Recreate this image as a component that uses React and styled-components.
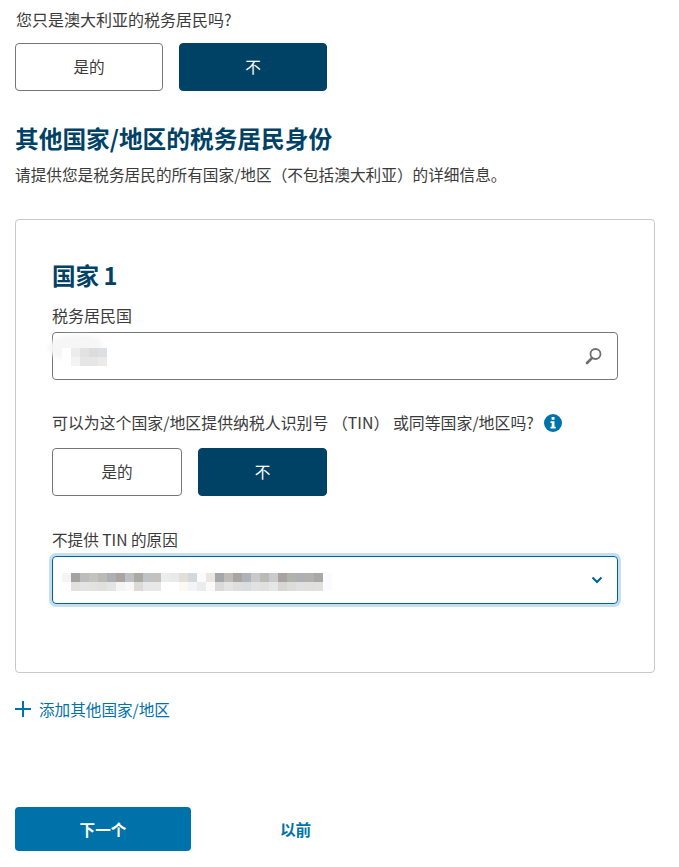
import React from "react";
import styled, { createGlobalStyle } from "styled-components";

const GlobalStyle = createGlobalStyle`
  html, body {
    margin: 0;
    padding: 0;
    background: #fff;
  }
  body {
    font-family: "Noto Sans CJK SC", "Liberation Sans", sans-serif;
    font-size: 15.6px;
    color: #3b3b3b;
  }
  * {
    box-sizing: border-box;
  }
`;

const Page = styled.div`
  width: 679px;
  height: 867px;
  padding: 7px 24px 0 15px;
  overflow: hidden;
`;

const Question = styled.div`
  font-size: ${(p) => p.$size}px;
  line-height: 24px;
  padding-left: ${(p) => p.$indent ?? 1}px;
`;

const Choices = styled.div`
  display: flex;
  gap: 16px;
  margin-top: ${(p) => p.$top}px;
`;

const Choice = styled.button`
  width: ${(p) => p.$width}px;
  height: 48px;
  padding: 0 0 2px;
  border-radius: 4px;
  border: 1px solid ${(p) => (p.$active ? "#004266" : "#767676")};
  background: ${(p) => (p.$active ? "#004266" : "#fff")};
  color: ${(p) => (p.$active ? "#fff" : "#3b3b3b")};
  font: inherit;
`;

const Heading = styled.h2`
  margin: 31px 0 0;
  font-size: 23.7px;
  line-height: 32px;
  font-weight: 700;
  color: #004266;
`;

const Lead = styled.p`
  margin: 9px 0 0;
  font-size: 15.67px;
  line-height: 24px;
`;

const Card = styled.section`
  margin-top: 32px;
  width: 640px;
  height: 454px;
  border: 1px solid #c8c8c8;
  border-radius: 4px;
  padding: 39px 36px 0;
`;

const CardTitle = styled.h3`
  margin: 0;
  font-size: 23.6px;
  line-height: 32px;
  font-weight: 700;
  word-spacing: -1px;
  color: #004266;
`;

const Label = styled.label`
  display: block;
  margin-top: ${(p) => p.$top}px;
  font-size: ${(p) => p.$size}px;
  line-height: 24px;
`;

const Field = styled.div`
  position: relative;
  display: flex;
  align-items: center;
  justify-content: flex-end;
  width: 566px;
  height: 48px;
  margin-top: 5px;
  padding-right: 14px;
  border-radius: 4px;
  border: 1px solid ${(p) => (p.$focused ? "#00609a" : "#767676")};
  box-shadow: ${(p) => (p.$focused ? "0 0 0 3px #c3deed" : "none")};
`;

const InfoRow = styled.div`
  display: flex;
  align-items: center;
  gap: 10px;
  margin-top: 31px;
  line-height: 24px;
`;

const Pixels = styled.div`
  position: absolute;
  left: ${(p) => p.$left}px;
  top: ${(p) => p.$top}px;
  display: grid;
  grid-template-columns: repeat(${(p) => p.$cols}, 9px);
  grid-auto-rows: ${(p) => p.$rowHeight}px;
`;

const Smudge = styled.div`
  position: absolute;
  left: -5px;
  top: 2px;
  width: 54px;
  height: 26px;
  background: #f6f6f6;
  border-radius: 60% 40% 40% 60%;
  filter: blur(2px);
`;

const AddLink = styled.div`
  display: flex;
  align-items: center;
  gap: 8px;
  margin-top: 24px;
  line-height: 24px;
  color: #0072aa;
`;

const Actions = styled.div`
  display: flex;
  align-items: center;
  margin-top: 86px;
`;

const NextButton = styled.button`
  width: 176px;
  height: 44px;
  border: none;
  border-radius: 4px;
  background: #0072aa;
  color: #fff;
  font: inherit;
  font-weight: 700;
`;

const BackButton = styled.button`
  margin-left: 89px;
  padding: 0;
  border: none;
  background: none;
  color: #0072aa;
  font: inherit;
  font-weight: 700;
`;

const countryCells = [
  "#fff", "#ececec", "#e2e2e2", "#dcdcdc", "#dde0e2",
  "#fff", "#f3f3f3", "#e6e6e6", "#e6e6e6", "#eaeaea",
];

const reasonTop = [
  "#f5f5f5",
  "#a3a3a3", "#bdbdbd", "#c3c3c0", "#bcbab6", "#aeafb2", "#aba2a2", "#bdc0c2", "#aca8a2", "#bcc4c8", "#c5c2bd",
  "#ebecec", "#e9e9e9", "#e2deda", "#d2d8dc", "#fbfbfb", "#ece6e2", "#a4a8aa", "#c0bbb8", "#a9a6a2", "#b0b3b6",
  "#c9cacc", "#bcbab6", "#c8cacc", "#a8a2a0", "#b0b2ae", "#aeaeb4", "#b2b0ac", "#a8a8a6",
  "#fbfbfe",
];

const reasonBottom = [
  "#fff",
  "#e2e0de", "#e4e4e2", "#e2e2e0", "#e0e0de", "#e4e4e4", "#f4f4f4", "#f8f8f8", "#dcdad8", "#e8e8e8", "#e8e8e8",
  "#fff", "#fff", "#fcf8f4", "#f2f4f8", "#ececec", "#fafafa", "#dcdad8", "#e4e4e4", "#dedede", "#dadcde",
  "#e2e2e2", "#e0e0de", "#e6e6e6", "#d6d6d4", "#dcdcda", "#e0e0e0", "#e0dfde", "#e0e0e0",
  "#fbfbfe",
];

const PixelBlur = ({ cells, cols, left, top, rowHeight }) => (
  <Pixels $cols={cols} $left={left} $top={top} $rowHeight={rowHeight} aria-hidden="true">
    {cells.map((color, i) => (
      <div key={i} style={{ background: color }} />
    ))}
  </Pixels>
);

const SearchIcon = () => (
  <svg width="18" height="18" viewBox="0 0 18 18" fill="none">
    <circle cx="10.5" cy="7" r="5" stroke="#6f6f6f" strokeWidth="1.8" />
    <path d="M7 11 L2 16" stroke="#6f6f6f" strokeWidth="2.6" strokeLinecap="round" />
  </svg>
);

const ChevronIcon = () => (
  <svg width="12" height="8" viewBox="0 0 12 8" fill="none">
    <path d="M1.5 1.5 L6 6 L10.5 1.5" stroke="#00609a" strokeWidth="2" />
  </svg>
);

const InfoIcon = () => (
  <svg width="18" height="18" viewBox="0 0 18 18">
    <circle cx="9" cy="9" r="9" fill="#0072aa" />
    <rect x="7.6" y="3" width="2.9" height="2.8" fill="#fff" />
    <path d="M6.5 7.3 H10.5 V12.8 H11.7 V14.6 H6.5 V12.8 H7.7 V9.1 H6.5 Z" fill="#fff" />
  </svg>
);

const PlusIcon = () => (
  <svg width="16" height="16" viewBox="0 0 16 16">
    <path d="M8 0 V16 M0 8 H16" stroke="#0072aa" strokeWidth="2" />
  </svg>
);

export default function App() {
  return (
    <Page>
      <GlobalStyle />
      <Question $size={16}>您只是澳大利亚的税务居民吗?</Question>
      <Choices $top={12}>
        <Choice $width={148}>是的</Choice>
        <Choice $width={148} $active>不</Choice>
      </Choices>

      <Heading>其他国家/地区的税务居民身份</Heading>
      <Lead>{"请提供您是税务居民的所有国家/地区\uFF08不包括澳大利亚\uFF09的详细信息。"}</Lead>

      <Card>
        <CardTitle>国家 1</CardTitle>
        <Label $top={12} $size={16}>税务居民国</Label>
        <Field>
          <Smudge />
          <PixelBlur cells={countryCells} cols={5} left={9} top={15} rowHeight={9} />
          <SearchIcon />
        </Field>

        <InfoRow>
          <Question $size={15.9} $indent={0}>{"可以为这个国家/地区提供纳税人识别号 \uFF08TIN\uFF09 或同等国家/地区吗?"}</Question>
          <InfoIcon />
        </InfoRow>
        <Choices $top={13}>
          <Choice $width={130}>是的</Choice>
          <Choice $width={129} $active>不</Choice>
        </Choices>

        <Label $top={31} $size={15.6}>不提供 TIN 的原因</Label>
        <Field $focused>
          <PixelBlur cells={[...reasonTop, ...reasonBottom]} cols={30} left={9} top={16} rowHeight={9} />
          <ChevronIcon />
        </Field>
      </Card>

      <AddLink>
        <PlusIcon />
        添加其他国家/地区
      </AddLink>

      <Actions>
        <NextButton>下一个</NextButton>
        <BackButton>以前</BackButton>
      </Actions>
    </Page>
  );
}
